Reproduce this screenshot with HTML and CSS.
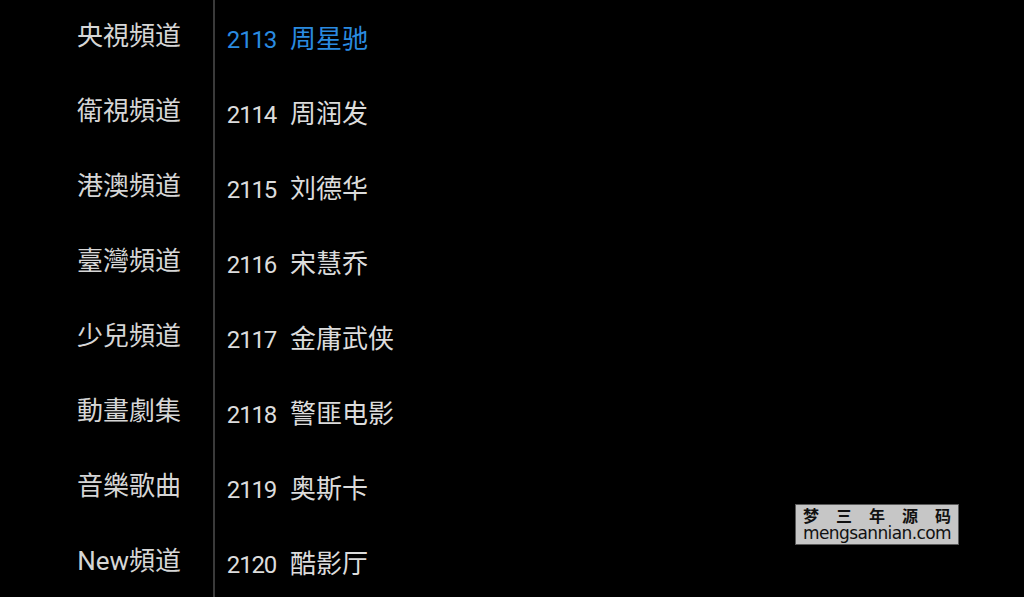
FILE: index.html
```html
<!DOCTYPE html>
<html lang="zh">
<head>
<meta charset="utf-8">
<link rel="stylesheet" href="styles.css">
</head>
<body>
<div class="screen">
  <ul class="categories">
    <li>央視頻道</li>
    <li>衛視頻道</li>
    <li>港澳頻道</li>
    <li>臺灣頻道</li>
    <li>少兒頻道</li>
    <li>動畫劇集</li>
    <li>音樂歌曲</li>
    <li>New頻道</li>
  </ul>
  <div class="divider"></div>
  <ul class="channels">
    <li class="active"><span class="num">2113</span><span class="name">周星驰</span></li>
    <li><span class="num">2114</span><span class="name">周润发</span></li>
    <li><span class="num">2115</span><span class="name">刘德华</span></li>
    <li><span class="num">2116</span><span class="name">宋慧乔</span></li>
    <li><span class="num">2117</span><span class="name">金庸武侠</span></li>
    <li><span class="num">2118</span><span class="name">警匪电影</span></li>
    <li><span class="num">2119</span><span class="name">奥斯卡</span></li>
    <li><span class="num">2120</span><span class="name">酷影厅</span></li>
  </ul>
  <div class="watermark">
    <div class="wm-cn">梦三年源码</div>
    <div class="wm-url">mengsannian.com</div>
  </div>
</div>
</body>
</html>
```
FILE: styles.css
```css
html, body {
  margin: 0;
  padding: 0;
  background: #000;
}
.screen {
  position: relative;
  width: 1024px;
  height: 597px;
  overflow: hidden;
  display: flex;
  background: #000;
  font-family: Roboto, "Noto Sans CJK TC", "Noto Sans CJK SC", sans-serif;
}
ul {
  list-style: none;
  margin: 0;
  padding: 0;
}
.categories {
  width: 213px;
  flex: none;
}
.categories li {
  height: 75px;
  box-sizing: border-box;
  padding: 0 32px 9px 0;
  display: flex;
  align-items: center;
  justify-content: flex-end;
  font-size: 26px;
  font-weight: 400;
  color: #d6d6d6;
  font-family: Roboto, "Noto Sans CJK TC", sans-serif;
}
.divider {
  width: 2px;
  flex: none;
  background: #3a3a3a;
}
.channels {
  flex: 1;
}
.channels li {
  height: 75px;
  display: flex;
  align-items: baseline;
  line-height: 73px;
  color: #dcdcdc;
  font-size: 26px;
  font-weight: 400;
}
.channels .num {
  width: 61px;
  text-align: right;
  font-family: Roboto, sans-serif;
  font-size: 24px;
  letter-spacing: -1.2px;
}
.channels .name {
  margin-left: 14px;
  font-family: "Noto Sans CJK SC", sans-serif;
}
.channels li.active {
  color: #2a8be0;
}
.watermark {
  position: absolute;
  left: 795px;
  top: 504px;
  width: 164px;
  height: 41px;
  box-sizing: border-box;
  background: #c6c6c6;
  border: 1px solid #5a5a5a;
  display: flex;
  flex-direction: column;
  align-items: center;
  color: #111;
  white-space: nowrap;
}
.wm-cn {
  font-family: "Noto Sans CJK SC", sans-serif;
  font-size: 16px;
  font-weight: 700;
  line-height: 19px;
  letter-spacing: 17px;
  margin-right: -17px;
  margin-top: 1px;
}
.wm-url {
  font-family: "DejaVu Sans", sans-serif;
  font-size: 17px;
  line-height: 18px;
  letter-spacing: -0.6px;
  margin-top: -1px;
}
```
